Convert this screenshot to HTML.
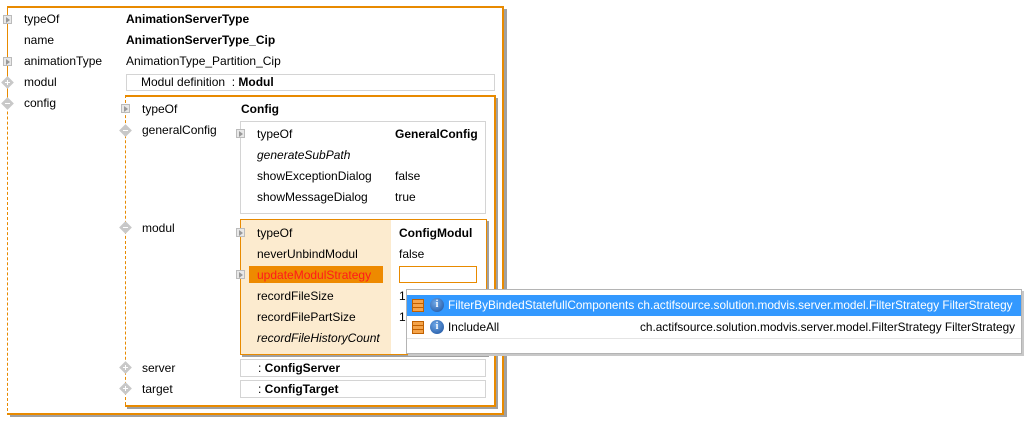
<!DOCTYPE html>
<html><head><meta charset="utf-8">
<style>
*{margin:0;padding:0;box-sizing:border-box}
body{width:1032px;height:423px;background:#fff;position:relative;overflow:hidden;font-family:"Liberation Sans",sans-serif;font-size:12px;color:#000}
.a{position:absolute}
.t{position:absolute;line-height:14px;white-space:nowrap}
.b{font-weight:bold}
.i{font-style:italic}
.tri{position:absolute;width:9px;height:9px;border:1px solid #bbb;background:#e8e8e8}
.tri:after{content:"";position:absolute;left:2px;top:1px;border-left:4px solid #999;border-top:3px solid transparent;border-bottom:3px solid transparent}
.dia{position:absolute;width:9px;height:9px;background:#c8c8c8;transform:rotate(45deg)}
.dia:after{content:"";position:absolute;left:2px;top:4px;width:5px;height:1px;background:#fff;transform:rotate(-45deg)}
.dia.p:before{content:"";position:absolute;left:4px;top:2px;width:1px;height:5px;background:#fff;transform:rotate(-45deg)}
.gbox{position:absolute;border:1px solid #d4d4d4;background:#fff}
.ic1{position:absolute;width:12px;height:13px;border:1px solid #c06000;background:repeating-linear-gradient(#f5a44a 0 3px,#c06000 3px 4px)}
.ic2{position:absolute;width:14px;height:14px;border-radius:50%;background:radial-gradient(circle at 40% 35%,#6fa8e8,#1a4f9c);color:#fff;font-weight:bold;font-size:10px;line-height:14px;text-align:center;font-family:"Liberation Serif",serif}
.pt{font-size:11.8px}
</style></head><body>
<div class="a" style="left:10px;top:9px;width:497px;height:408px;background:#a0a0a0"></div>
<div class="a" style="left:7px;top:6px;width:497px;height:409px;background:#fff;border-top:2px solid #e88a00;border-right:2px solid #e88a00;border-bottom:2px solid #e88a00"></div>
<div class="a" style="left:7px;top:6px;width:0;height:405px;border-left:1px dashed #e88a00"></div>
<div class="a" style="left:7px;top:6px;width:1px;height:100px;background:#e88a00"></div>

<div class="tri" style="left:3px;top:15px"></div>
<div class="tri" style="left:3px;top:57px"></div>
<div class="dia p" style="left:3px;top:78px"></div>
<div class="dia" style="left:3px;top:99px"></div>

<div class="t" style="left:24px;top:12px">typeOf</div>
<div class="t b" style="left:126px;top:12px">AnimationServerType</div>
<div class="t" style="left:24px;top:33px">name</div>
<div class="t b" style="left:126px;top:33px">AnimationServerType_Cip</div>
<div class="t" style="left:24px;top:54px">animationType</div>
<div class="t" style="left:126px;top:54px">AnimationType_Partition_Cip</div>
<div class="t" style="left:24px;top:75px">modul</div>
<div class="gbox" style="left:126px;top:74px;width:369px;height:17px"></div>
<div class="t" style="left:141px;top:75px">Modul definition&nbsp; : <b>Modul</b></div>
<div class="t" style="left:24px;top:96px">config</div>

<div class="a" style="left:127px;top:98px;width:371px;height:311px;background:#a0a0a0"></div>
<div class="a" style="left:125px;top:95px;width:371px;height:312px;background:#fff;border-top:2px solid #e88a00;border-right:2px solid #e88a00;border-bottom:2px solid #e88a00"></div>
<div class="a" style="left:125px;top:95px;height:310px;border-left:1px dashed #e88a00"></div>
<div class="tri" style="left:121px;top:104px"></div>
<div class="dia" style="left:121px;top:126px"></div>
<div class="dia" style="left:121px;top:223px"></div>
<div class="dia p" style="left:121px;top:363px"></div>
<div class="dia p" style="left:121px;top:384px"></div>
<div class="t" style="left:142px;top:102px">typeOf</div>
<div class="t b" style="left:241px;top:102px">Config</div>
<div class="t" style="left:142px;top:123px">generalConfig</div>
<div class="t" style="left:142px;top:221px">modul</div>
<div class="t" style="left:142px;top:361px">server</div>
<div class="t" style="left:142px;top:382px">target</div>

<div class="gbox" style="left:240px;top:121px;width:246px;height:93px"></div>
<div class="tri" style="left:236px;top:129px"></div>
<div class="t" style="left:257px;top:127px">typeOf</div>
<div class="t b" style="left:395px;top:127px">GeneralConfig</div>
<div class="t i" style="left:257px;top:148px">generateSubPath</div>
<div class="t" style="left:257px;top:169px">showExceptionDialog</div>
<div class="t" style="left:395px;top:169px">false</div>
<div class="t" style="left:257px;top:190px">showMessageDialog</div>
<div class="t" style="left:395px;top:190px">true</div>

<div class="a" style="left:242px;top:221px;width:247px;height:136px;background:#a0a0a0"></div>
<div class="a" style="left:240px;top:219px;width:247px;height:136px;background:#fff;border:1px solid #e88a00"></div>
<div class="a" style="left:241px;top:220px;width:150px;height:134px;background:#fcebcf"></div>
<div class="tri" style="left:236px;top:228px"></div>
<div class="tri" style="left:236px;top:270px"></div>
<div class="t" style="left:257px;top:226px">typeOf</div>
<div class="t b" style="left:399px;top:226px">ConfigModul</div>
<div class="t" style="left:257px;top:247px">neverUnbindModul</div>
<div class="t" style="left:399px;top:247px">false</div>
<div class="a" style="left:249px;top:266px;width:134px;height:17px;background:#ee8a00"></div>
<div class="t" style="left:257px;top:268px;color:#ff1a1a">updateModulStrategy</div>
<div class="a" style="left:399px;top:266px;width:78px;height:17px;border:1px solid #e88a00;background:#fff"></div>
<div class="t" style="left:257px;top:289px">recordFileSize</div>
<div class="t" style="left:399px;top:289px">1</div>
<div class="t" style="left:257px;top:310px">recordFilePartSize</div>
<div class="t" style="left:399px;top:310px">1</div>
<div class="t i" style="left:257px;top:331px">recordFileHistoryCount</div>

<div class="gbox" style="left:240px;top:359px;width:246px;height:18px"></div>
<div class="t" style="left:258px;top:361px">: <b>ConfigServer</b></div>
<div class="gbox" style="left:240px;top:380px;width:246px;height:18px"></div>
<div class="t" style="left:258px;top:382px">: <b>ConfigTarget</b></div>

<div class="a" style="left:408px;top:291px;width:616px;height:65px;background:#c8c8c8"></div>
<div class="a" style="left:406px;top:289px;width:616px;height:65px;background:#fff;border:1px solid #b4b4b4;overflow:hidden"></div>
<div class="a" style="left:407px;top:295px;width:614px;height:21px;background:#3399ff"></div>
<div class="a" style="left:407px;top:338px;width:614px;height:1px;background:#e4e4e4"></div>
<div class="ic1" style="left:412px;top:299px"></div>
<div class="ic2" style="left:430px;top:298px">i</div>
<div class="t pt" style="left:448px;top:298px;color:#fff">FilterByBindedStatefullComponents ch.actifsource.solution.modvis.server.model.FilterStrategy FilterStrategy</div>
<div class="ic1" style="left:412px;top:321px"></div>
<div class="ic2" style="left:430px;top:320px">i</div>
<div class="t pt" style="left:448px;top:320px">IncludeAll</div>
<div class="t pt" style="left:640px;top:320px">ch.actifsource.solution.modvis.server.model.FilterStrategy FilterStrategy</div>
</body></html>
